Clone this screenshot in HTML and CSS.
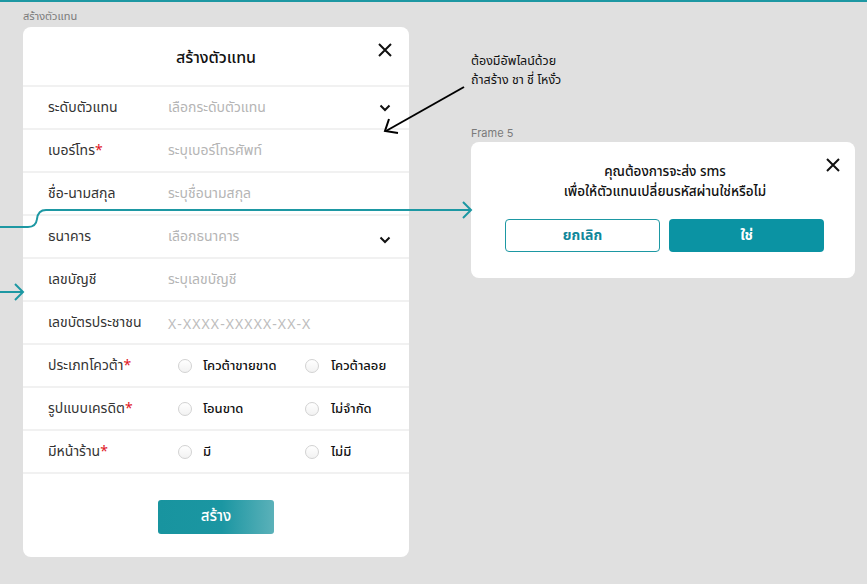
FILE: index.html
```html
<!DOCTYPE html>
<html lang="th">
<head>
<meta charset="utf-8">
<link rel="stylesheet" href="styles.css">
</head>
<body>
<div class="canvas">
  <div class="topline"></div>
  <div class="frame-label frame-label-1">สร้างตัวแทน</div>

  <div class="modal">
    <div class="modal-head">
      <div class="modal-title">สร้างตัวแทน</div>
      <svg class="close" viewBox="0 0 14 14" width="14" height="14"><path d="M1 1L13 13M13 1L1 13" stroke="#111" stroke-width="2" fill="none"/></svg>
    </div>
    <div class="row">
      <div class="label">ระดับตัวแทน</div>
      <div class="ph">เลือกระดับตัวแทน</div>
      <svg class="chev" viewBox="0 0 12 8" width="12" height="8"><path d="M1.5 1.5L6 6L10.5 1.5" stroke="#111" stroke-width="2" fill="none"/></svg>
    </div>
    <div class="row">
      <div class="label">เบอร์โทร<span class="req">*</span></div>
      <div class="ph">ระบุเบอร์โทรศัพท์</div>
    </div>
    <div class="row">
      <div class="label">ชื่อ-นามสกุล</div>
      <div class="ph">ระบุชื่อนามสกุล</div>
    </div>
    <div class="row">
      <div class="label">ธนาคาร</div>
      <div class="ph">เลือกธนาคาร</div>
      <svg class="chev chev-low" viewBox="0 0 12 8" width="12" height="8"><path d="M1.5 1.5L6 6L10.5 1.5" stroke="#111" stroke-width="2" fill="none"/></svg>
    </div>
    <div class="row">
      <div class="label">เลขบัญชี</div>
      <div class="ph">ระบุเลขบัญชี</div>
    </div>
    <div class="row">
      <div class="label">เลขบัตรประชาชน</div>
      <div class="ph ph-id">X-XXXX-XXXXX-XX-X</div>
    </div>
    <div class="row">
      <div class="label">ประเภทโควต้า<span class="req">*</span></div>
      <div class="radios">
        <div class="opt"><span class="radio"></span>โควต้าขายขาด</div>
        <div class="opt"><span class="radio"></span>โควต้าลอย</div>
      </div>
    </div>
    <div class="row">
      <div class="label">รูปแบบเครดิต<span class="req">*</span></div>
      <div class="radios">
        <div class="opt"><span class="radio"></span>โอนขาด</div>
        <div class="opt"><span class="radio"></span>ไม่จำกัด</div>
      </div>
    </div>
    <div class="row">
      <div class="label">มีหน้าร้าน<span class="req">*</span></div>
      <div class="radios">
        <div class="opt"><span class="radio"></span>มี</div>
        <div class="opt"><span class="radio"></span>ไม่มี</div>
      </div>
    </div>
    <div class="modal-foot">
      <button class="btn-create">สร้าง</button>
    </div>
  </div>

  <div class="note">ต้องมีอัพไลน์ด้วย<br>ถ้าสร้าง ชา ชี่ โหงั๋ว</div>

  <div class="frame-label frame-label-2">Frame 5</div>
  <div class="dialog">
    <svg class="dclose" viewBox="0 0 14 14" width="14" height="14"><path d="M1 1L13 13M13 1L1 13" stroke="#111" stroke-width="2" fill="none"/></svg>
    <div class="dtext">คุณต้องการจะส่ง sms<br>เพื่อให้ตัวแทนเปลี่ยนรหัสผ่านใช่หรือไม่</div>
    <div class="dbtns">
      <button class="btn-cancel">ยกเลิก</button>
      <button class="btn-yes">ใช่</button>
    </div>
  </div>

  <svg class="overlay" width="867" height="584" viewBox="0 0 867 584">
    <path d="M0 227 H28 Q36 227 37 219 Q38 210 46 210 H470" stroke="#1d98a3" stroke-width="2" fill="none"/>
    <path d="M463 202 L471 210 L463 218" stroke="#1d98a3" stroke-width="2" fill="none"/>
    <path d="M0 292 H22" stroke="#1d98a3" stroke-width="2" fill="none"/>
    <path d="M15 284 L23 292 L15 300" stroke="#1d98a3" stroke-width="2" fill="none"/>
    <path d="M464 87 L386 131" stroke="#000" stroke-width="2" fill="none"/>
    <path d="M389 119 L385 131 L398 133" stroke="#000" stroke-width="2" fill="none"/>
  </svg>
</div>
</body>
</html>
```
FILE: styles.css
```css
* { box-sizing: border-box; }
html, body { margin: 0; padding: 0; }
body {
  background: #e0e0e0;
  font-family: "Noto Sans Thai", "Noto Sans", "DejaVu Sans", sans-serif;
  color: #333;
}
.canvas {
  position: relative;
  width: 867px;
  height: 584px;
  overflow: hidden;
}
.topline {
  height: 2px;
  background: #1d98a3;
}
.frame-label {
  position: absolute;
  font-size: 11px;
  color: #7a7a7a;
  line-height: 14px;
}
.frame-label-1 { left: 23px; top: 10px; }
.frame-label-2 { left: 471px; top: 126px; font-family: "Inter", "Noto Sans", sans-serif; }

.modal {
  position: absolute;
  left: 23px;
  top: 27px;
  width: 386px;
  height: 530px;
  background: #fff;
  border-radius: 8px;
  display: flex;
  flex-direction: column;
}
.modal-head {
  position: relative;
  height: 60px;
  flex-shrink: 0;
  border-bottom: 2px solid #f1f1f1;
  display: flex;
  align-items: center;
  justify-content: center;
}
.modal-title {
  font-size: 16px;
  font-weight: 500;
  color: #111;
  margin-top: 3px;
}
.close {
  position: absolute;
  right: 17px;
  top: 16px;
}
.row {
  position: relative;
  height: 43px;
  flex-shrink: 0;
  border-bottom: 2px solid #f1f1f1;
  display: flex;
  align-items: center;
  padding-left: 25px;
  font-size: 14px;
}
.label {
  width: 120px;
  flex-shrink: 0;
  color: #333;
}
.req { color: #e0141e; }
.ph { color: #b5b5b5; }
.ph-id { letter-spacing: 1.1px; margin-top: 4px; color: #bdbdbd; }
.chev {
  position: absolute;
  right: 18px;
  top: 17px;
}
.chev-low { top: 20px; }
.radios {
  display: flex;
  font-size: 13px;
  font-weight: 500;
  color: #111;
}
.opt {
  display: flex;
  align-items: center;
  width: 127px;
  padding-left: 10px;
}
.opt + .opt { width: auto; }
.radio {
  width: 14px;
  height: 14px;
  border-radius: 50%;
  border: 1px solid #d2d2d2;
  background: linear-gradient(#fff, #f2f2f2);
  margin-right: 11px;
}
.opt + .opt .radio { margin-right: 12px; }
.modal-foot {
  flex: 1;
  display: flex;
  justify-content: center;
  padding-top: 26px;
}
.btn-create {
  width: 116px;
  height: 34px;
  border: none;
  border-radius: 3px;
  background: linear-gradient(90deg, #18949f 0%, #1b96a2 55%, #5bb1b9 100%);
  color: #fff;
  font-family: inherit;
  font-size: 15px;
  font-weight: 500;
  padding-bottom: 2px;
}

.note {
  position: absolute;
  left: 471px;
  top: 52px;
  font-size: 12.5px;
  line-height: 19px;
  color: #111;
}

.dialog {
  position: absolute;
  left: 471px;
  top: 142px;
  width: 384px;
  height: 136px;
  background: #fff;
  border-radius: 8px;
  display: flex;
  flex-direction: column;
  align-items: center;
  padding-top: 20px;
}
.dclose {
  position: absolute;
  right: 15px;
  top: 16px;
}
.dtext {
  font-size: 13.5px;
  font-weight: 500;
  color: #111;
  text-align: center;
  line-height: 20px;
  margin-left: 4px;
}
.dbtns {
  display: flex;
  gap: 9px;
  margin-top: 17px;
  margin-left: 3px;
}
.dbtns button {
  width: 155px;
  height: 33px;
  border-radius: 4px;
  font-family: inherit;
  font-size: 14px;
  font-weight: 700;
}
.btn-cancel {
  background: #fff;
  border: 1px solid #1d98a3;
  color: #11879a;
}
.btn-yes {
  background: #0b93a3;
  border: none;
  color: #fff;
}

.overlay {
  position: absolute;
  left: 0;
  top: 0;
  pointer-events: none;
}
```
